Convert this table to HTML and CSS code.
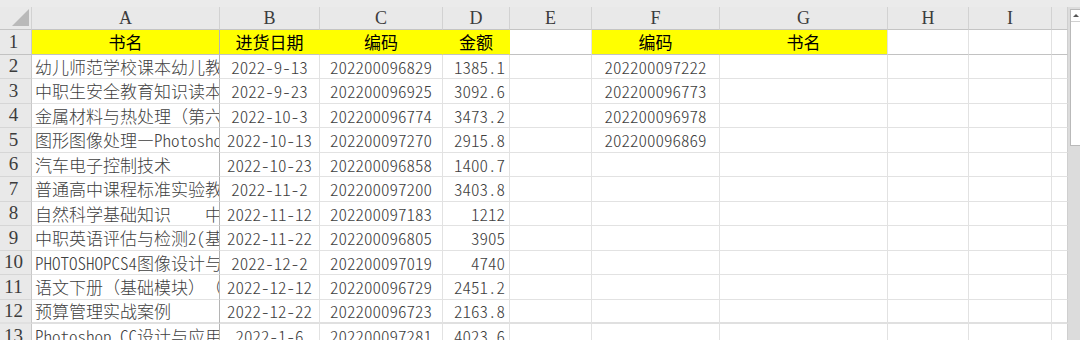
FILE: index.html
```html
<!DOCTYPE html>
<html lang="zh">
<head>
<meta charset="utf-8">
<title>Sheet</title>
<link rel="stylesheet" href="styles.css">
</head>
<body>
<div class="app">
  <div class="topbar"></div>
  <div class="main">
    <div class="sheet">
      <div class="c corner"><div class="tri"></div></div>
      <div class="c ch">A</div><div class="c ch">B</div><div class="c ch">C</div><div class="c ch">D</div><div class="c ch">E</div><div class="c ch">F</div><div class="c ch">G</div><div class="c ch">H</div><div class="c ch">I</div><div class="c ch j"></div>

      <div class="c rh r1">1</div>
      <div class="c r1 y a">书名</div><div class="c r1 y">进货日期</div><div class="c r1 y">编码</div><div class="c r1 y d">金额</div><div class="c r1"></div><div class="c r1 y">编码</div><div class="c r1 y g">书名</div><div class="c r1"></div><div class="c r1"></div><div class="c r1 j"></div>

      <div class="c rh">2</div>
      <div class="c a t">幼儿师范学校课本幼儿教师口语</div><div class="c n">2022-9-13</div><div class="c n">202200096829</div><div class="c n d">1385.1</div><div class="c"></div><div class="c n">202200097222</div><div class="c"></div><div class="c"></div><div class="c"></div><div class="c j"></div>

      <div class="c rh">3</div>
      <div class="c a t">中职生安全教育知识读本（第二版）</div><div class="c n">2022-9-23</div><div class="c n">202200096925</div><div class="c n d">3092.6</div><div class="c"></div><div class="c n">202200096773</div><div class="c"></div><div class="c"></div><div class="c"></div><div class="c j"></div>

      <div class="c rh">4</div>
      <div class="c a t">金属材料与热处理（第六版）</div><div class="c n">2022-10-3</div><div class="c n">202200096774</div><div class="c n d">3473.2</div><div class="c"></div><div class="c n">202200096978</div><div class="c"></div><div class="c"></div><div class="c"></div><div class="c j"></div>

      <div class="c rh">5</div>
      <div class="c a t">图形图像处理—<span class="h">Photoshop</span></div><div class="c n">2022-10-13</div><div class="c n">202200097270</div><div class="c n d">2915.8</div><div class="c"></div><div class="c n">202200096869</div><div class="c"></div><div class="c"></div><div class="c"></div><div class="c j"></div>

      <div class="c rh">6</div>
      <div class="c a t">汽车电子控制技术</div><div class="c n">2022-10-23</div><div class="c n">202200096858</div><div class="c n d">1400.7</div><div class="c"></div><div class="c"></div><div class="c"></div><div class="c"></div><div class="c"></div><div class="c j"></div>

      <div class="c rh">7</div>
      <div class="c a t">普通高中课程标准实验教科书</div><div class="c n">2022-11-2</div><div class="c n">202200097200</div><div class="c n d">3403.8</div><div class="c"></div><div class="c"></div><div class="c"></div><div class="c"></div><div class="c"></div><div class="c j"></div>

      <div class="c rh">8</div>
      <div class="c a t">自然科学基础知识　　中职</div><div class="c n">2022-11-12</div><div class="c n">202200097183</div><div class="c n d">1212</div><div class="c"></div><div class="c"></div><div class="c"></div><div class="c"></div><div class="c"></div><div class="c j"></div>

      <div class="c rh">9</div>
      <div class="c a t">中职英语评估与检测<span class="h">2(</span>基础模块<span class="h">)</span></div><div class="c n">2022-11-22</div><div class="c n">202200096805</div><div class="c n d">3905</div><div class="c"></div><div class="c"></div><div class="c"></div><div class="c"></div><div class="c"></div><div class="c j"></div>

      <div class="c rh">10</div>
      <div class="c a t"><span class="h">PHOTOSHOPCS4</span>图像设计与制作</div><div class="c n">2022-12-2</div><div class="c n">202200097019</div><div class="c n d">4740</div><div class="c"></div><div class="c"></div><div class="c"></div><div class="c"></div><div class="c"></div><div class="c j"></div>

      <div class="c rh">11</div>
      <div class="c a t">语文下册（基础模块）（第三版）</div><div class="c n">2022-12-12</div><div class="c n">202200096729</div><div class="c n d">2451.2</div><div class="c"></div><div class="c"></div><div class="c"></div><div class="c"></div><div class="c"></div><div class="c j"></div>

      <div class="c rh r12">12</div>
      <div class="c a t r12">预算管理实战案例</div><div class="c n r12">2022-12-22</div><div class="c n r12">202200096723</div><div class="c n d r12">2163.8</div><div class="c r12"></div><div class="c r12"></div><div class="c r12"></div><div class="c r12"></div><div class="c r12"></div><div class="c j r12"></div>

      <div class="c rh">13</div>
      <div class="c a t"><span class="h">Photoshop CC</span>设计与应用</div><div class="c n">2022-1-6</div><div class="c n">202200097281</div><div class="c n d">4023.6</div><div class="c"></div><div class="c"></div><div class="c"></div><div class="c"></div><div class="c"></div><div class="c j"></div>
    </div>
    <div class="vscroll">
      <div class="thumb">
        <div class="up"></div>
      </div>
    </div>
  </div>
</div>
</body>
</html>
```
FILE: styles.css
```css
html, body {
  margin: 0;
  height: 340px;
  overflow: hidden;
  background: #fff;
}
.app {
  display: flex;
  flex-direction: column;
  height: 340px;
  background: #e9e9e9;
}
.topbar {
  height: 7px;
  flex: none;
  background: #ebebeb;
}
.main {
  display: flex;
  flex: 1;
  min-height: 0;
}
.sheet {
  display: grid;
  grid-template-columns: 32px 188px 100px 123px 67px 82px 128px 168px 81px 83px 16px;
  grid-template-rows: 23px repeat(13, 24.5px);
  width: 1068px;
  flex: none;
  background: #fff;
  align-content: start;
  overflow: hidden;
}
.c {
  box-sizing: border-box;
  border-right: 1px solid #e2e2e2;
  border-bottom: 1px solid #e2e2e2;
  display: flex;
  align-items: center;
  justify-content: center;
  overflow: hidden;
  white-space: pre;
  font-family: "Noto Sans CJK SC", sans-serif;
  font-weight: 300;
  font-size: 17px;
  color: #404040;
  padding: 0 3px;
  text-spacing-trim: space-all;
}
.n, .h {
  font-feature-settings: "hwid" 1;
}
.corner {
  background: #e9e9e9;
  border-right: 1px solid #d2d2d2;
  border-bottom: 1px solid #c4c4c4;
  justify-content: flex-end;
  align-items: flex-end;
  padding: 0 2px 3px 0;
}
.tri {
  width: 17px;
  height: 17px;
  background: #b9b9b9;
  clip-path: polygon(100% 0, 100% 100%, 0 100%);
}
.ch {
  background: #e9e9e9;
  border-right: 1px solid #d2d2d2;
  border-bottom: 1px solid #c4c4c4;
  font-family: "Liberation Serif", serif;
  font-weight: 400;
  font-size: 18px;
  color: #3c3c3c;
}
.rh {
  background: #e9e9e9;
  border-right: 1px solid #c8c8c8;
  border-bottom: 1px solid #d6d6d6;
  font-family: "Liberation Serif", serif;
  font-weight: 400;
  font-size: 19px;
  color: #3c3c3c;
  padding: 0 4px 0 0;
}
.t {
  justify-content: flex-start;
}
.d {
  justify-content: flex-end;
  padding-right: 4px;
}
.r1 {
  border-bottom-color: #c2c2c2;
}
.y {
  background: #ffff00;
  border-right-color: #ffff00;
  justify-content: center;
  color: #000;
  font-weight: 400;
  padding: 0;
}
.g {
  border-right-color: #e2e2e2;
}
.a {
  border-right-color: #b4b4b4;
}
.r12 {
  border-bottom: 2px solid #e0e0e0;
}
.j {
  border-right: 1px solid #cfcfcf;
}
.vscroll {
  flex: 1;
  background: #dcdcdc;
  padding: 2px 0 0 2px;
}
.thumb {
  height: 137px;
  background: #fff;
  border: 1px solid #b9b9b9;
  border-right: none;
  box-sizing: border-box;
}
.up {
  height: 11px;
  border-bottom: 1px solid #d0d0d0;
  display: flex;
  justify-content: center;
  align-items: center;
}
.up::before {
  content: "";
  width: 0;
  height: 0;
  border-left: 3px solid transparent;
  border-right: 3px solid transparent;
  border-bottom: 3px solid #555;
}
```
